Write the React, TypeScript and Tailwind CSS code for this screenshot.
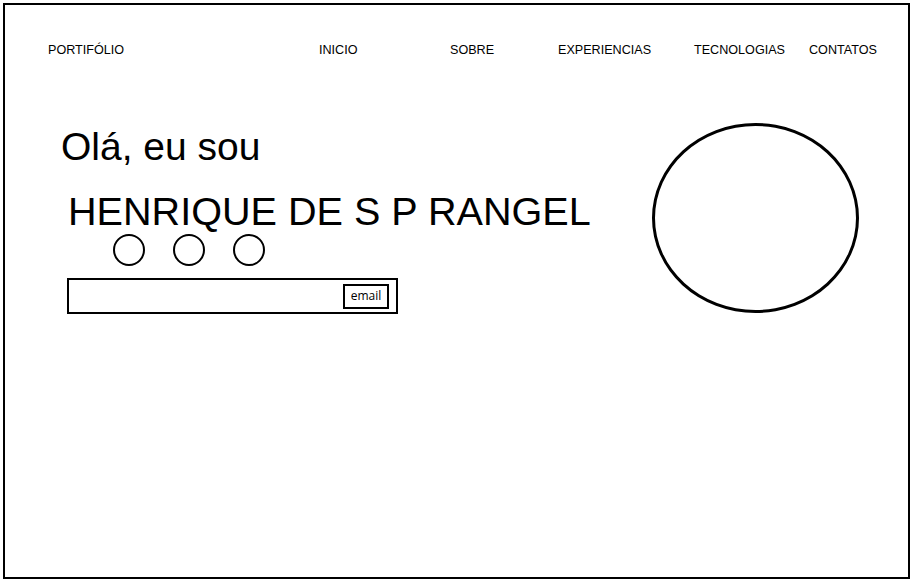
export default function App() {
  const nav = [
    { label: "PORTIFÓLIO", w: "w-[271px]" },
    { label: "INICIO", w: "w-[131px]" },
    { label: "SOBRE", w: "w-[108px]" },
    { label: "EXPERIENCIAS", w: "w-[136px]" },
    { label: "TECNOLOGIAS", w: "w-[115px]" },
    { label: "CONTATOS", w: "w-[80px]" },
  ];
  return (
    <div className="w-[913px] h-[582px] bg-white p-[3px]" style={{ fontFamily: '"Liberation Sans", Arial, sans-serif' }}>
      <div className="h-full w-full border-2 border-black bg-white">
        <nav className="flex pt-[37px] pl-[43px] text-[12.6px] leading-[16px] text-black">
          {nav.map((n) => (
            <div key={n.label} className={n.w}>
              {n.label}
            </div>
          ))}
        </nav>
        <div className="flex mt-[65px]">
          <div className="w-[647px] pl-[56px] pt-[4px]">
            <div className="text-[39px] leading-[39px] text-black">Olá, eu sou</div>
            <div className="ml-[7px] mt-[25px] text-[39.6px] leading-[40px] text-black">HENRIQUE DE S P RANGEL</div>
            <div className="ml-[52px] mt-[3px] flex gap-[28px]">
              <div className="h-[32px] w-[32px] rounded-full border-2 border-black" />
              <div className="h-[32px] w-[32px] rounded-full border-2 border-black" />
              <div className="h-[32px] w-[32px] rounded-full border-2 border-black" />
            </div>
            <div className="ml-[6px] mt-[12px] flex h-[36px] w-[331px] items-center justify-end border-2 border-black pr-[7px]">
              <div className="flex h-[25px] w-[46px] items-center justify-center border-2 border-black text-[12px] leading-none" style={{ fontFamily: '"Open Sans", sans-serif' }}>
                email
              </div>
            </div>
          </div>
          <div className="h-[190px] w-[207px] rounded-[50%] border-[3px] border-black" />
        </div>
      </div>
    </div>
  );
}
